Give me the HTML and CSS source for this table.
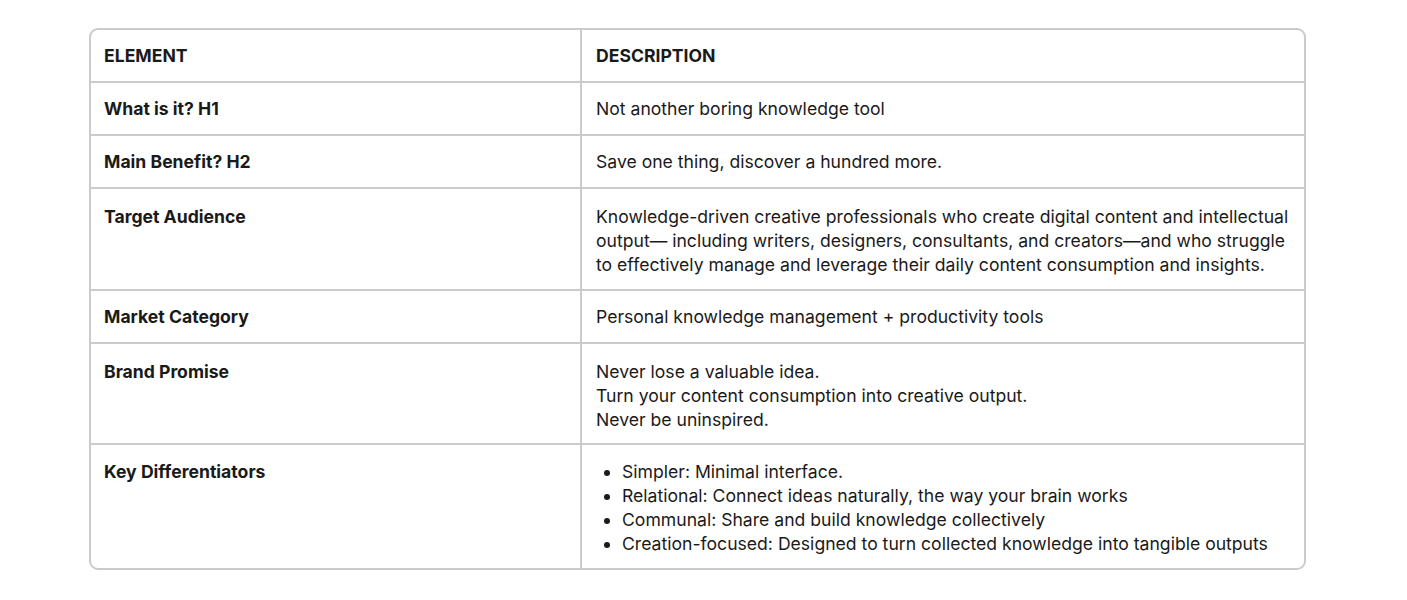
FILE: index.html
```html
<!DOCTYPE html>
<html>
<head>
<meta charset="utf-8">
<link rel="stylesheet" href="styles.css">
</head>
<body>
<div class="page">
  <div class="table-wrap">
    <table class="grid">
      <thead>
        <tr><th class="col-el">ELEMENT</th><th>DESCRIPTION</th></tr>
      </thead>
      <tbody>
        <tr><td class="label">What is it? H1</td><td>Not another boring knowledge tool</td></tr>
        <tr><td class="label">Main Benefit? H2</td><td>Save one thing, discover a hundred more.</td></tr>
        <tr class="row-a"><td class="label">Target Audience</td><td>Knowledge-driven creative professionals who create digital content and intellectual output— including writers, designers, consultants, and creators—and who struggle to effectively manage and leverage their daily content consumption and insights.</td></tr>
        <tr><td class="label">Market Category</td><td>Personal knowledge management + productivity tools</td></tr>
        <tr class="row-b"><td class="label">Brand Promise</td><td>Never lose a valuable idea.<br>Turn your content consumption into creative output.<br>Never be uninspired.</td></tr>
        <tr class="row-c"><td class="label">Key Differentiators</td><td>
          <ul class="list">
            <li>Simpler: Minimal interface.</li>
            <li>Relational: Connect ideas naturally, the way your brain works</li>
            <li>Communal: Share and build knowledge collectively</li>
            <li>Creation-focused: Designed to turn collected knowledge into tangible outputs</li>
          </ul>
        </td></tr>
      </tbody>
    </table>
  </div>
</div>
</body>
</html>
```
FILE: styles.css
```css
html, body { margin: 0; padding: 0; background: #fff; }
body {
  font-family: Inter, "Liberation Sans", sans-serif;
  color: #1a1a1a;
}
.page { padding: 28px 0 0 89px; }
.table-wrap {
  width: 1217px;
  box-sizing: border-box;
  border: 2px solid #cbcbcb;
  border-radius: 9px;
  overflow: hidden;
}
.grid {
  width: 100%;
  border-collapse: collapse;
  font-size: 17.6px;
  line-height: 24px;
}
.grid th, .grid td {
  text-align: left;
  vertical-align: top;
  padding: 14px 13px 13px 13px;
  border-bottom: 2px solid #cbcbcb;
}
.grid tr:last-child td { border-bottom: none; }
.grid th:first-child, .grid td:first-child {
  width: 463px;
  border-right: 2px solid #cbcbcb;
}
.grid td:last-child, .grid th:last-child { padding-left: 14px; padding-right: 12px; }
.grid th { font-weight: 700; }
.grid .row-a td { padding-top: 16px; padding-bottom: 12px; }
.grid .row-b td { padding-top: 16px; padding-bottom: 11px; }
.grid .row-c td { padding-top: 15px; padding-bottom: 12px; }
.label { font-weight: 700; }
.list { margin: 0; padding: 0 0 0 26px; }
.list li { margin: 0; }
```
